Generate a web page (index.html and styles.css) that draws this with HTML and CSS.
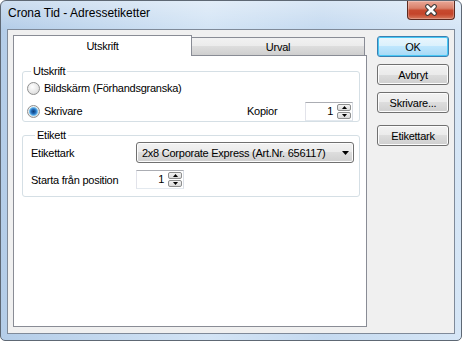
FILE: index.html
```html
<!DOCTYPE html>
<html lang="sv">
<head>
  <meta charset="UTF-8" />
  <title>Crona Tid - Adressetiketter</title>
  <link rel="stylesheet" href="styles.css">
</head>
<body>
  <div class="window">
    <div class="titlebar">
      <span class="title">Crona Tid - Adressetiketter</span>
      <span class="close">
        <svg width="14" height="12" viewBox="0 0 14 12">
          <path d="M3.5 2.5 L10.5 9.5 M10.5 2.5 L3.5 9.5" stroke="#3a3a3a" stroke-width="4.6" stroke-linecap="round" />
          <path d="M3.5 2.5 L10.5 9.5 M10.5 2.5 L3.5 9.5" stroke="#fff" stroke-width="2.6" stroke-linecap="round" />
        </svg>
      </span>
    </div>

    <div class="client">
      <div class="tabctrl">
        <div class="tabs">
          <div class="tab active">Utskrift</div>
          <div class="tab">Urval</div>
        </div>
        <div class="panel">
          <fieldset class="group">
            <legend>Utskrift</legend>
            <div class="row">
              <span class="radio"></span>
              <span>Bildskärm (Förhandsgranska)</span>
            </div>
            <div class="row row-gap">
              <span class="radio checked"></span>
              <span>Skrivare</span>
              <span class="kopior">Kopior</span>
              <div class="spin">
                <span class="spin-val">1</span>
                <span class="spin-btns">
                  <span><svg width="5" height="3" viewBox="0 0 5 3"><polygon points="0,3 5,3 2.5,0" fill="#000" /></svg></span>
                  <span><svg width="5" height="3" viewBox="0 0 5 3"><polygon points="0,0 5,0 2.5,3" fill="#000" /></svg></span>
                </span>
              </div>
            </div>
          </fieldset>

          <fieldset class="group group-etikett">
            <legend>Etikett</legend>
            <div class="row row-tall">
              <span class="field-label">Etikettark</span>
              <div class="combo">
                <span>2x8 Corporate Express (Art.Nr. 656117)</span>
                <svg width="7" height="4" viewBox="0 0 7 4"><polygon points="0,0 7,0 3.5,4" fill="#000" /></svg>
              </div>
            </div>
            <div class="row row-tall row-gap2">
              <span class="field-label">Starta från position</span>
              <div class="spin">
                <span class="spin-val">1</span>
                <span class="spin-btns">
                  <span><svg width="5" height="3" viewBox="0 0 5 3"><polygon points="0,3 5,3 2.5,0" fill="#000" /></svg></span>
                  <span><svg width="5" height="3" viewBox="0 0 5 3"><polygon points="0,0 5,0 2.5,3" fill="#000" /></svg></span>
                </span>
              </div>
            </div>
          </fieldset>
        </div>
      </div>

      <div class="buttons">
        <div class="btn default">OK</div>
        <div class="btn">Avbryt</div>
        <div class="btn">Skrivare...</div>
        <div class="btn btn-sep">Etikettark</div>
      </div>
    </div>
  </div>
</body>
</html>
```

FILE: styles.css
```css
* { box-sizing: border-box; }
html, body { margin: 0; }
body {
  width: 462px;
  height: 341px;
  font-family: "Liberation Sans", Arial, sans-serif;
  font-size: 11px;
  letter-spacing: -0.25px;
  color: #000;
  background: #fff;
  overflow: hidden;
}

.window {
  width: 462px;
  height: 341px;
  display: flex;
  flex-direction: column;
  padding: 0 6px 6px;
  border: 1px solid #5e6874;
  border-radius: 6px 6px 5px 5px;
  background:
    linear-gradient(rgba(255,255,255,0.35), rgba(255,255,255,0) 28px),
    linear-gradient(to right, #b4cde8, #d3e4f5 45%, #c5daf0 70%, #d6e6f6);
}
.titlebar {
  flex: none;
  height: 28px;
  display: flex;
  align-items: flex-start;
}
.title {
  font-size: 12px;
  letter-spacing: 0;
  line-height: 15px;
  padding: 5px 0 0 1px;
}
.close {
  margin-left: auto;
  width: 48px;
  height: 19px;
  display: flex;
  align-items: center;
  justify-content: center;
  border: 1px solid #5c2a20;
  border-top: none;
  border-radius: 0 0 4px 4px;
  background: linear-gradient(#eaa897 0, #d9806a 40%, #c74a2f 52%, #c4442a 72%, #d6785c 100%);
  box-shadow: inset 0 0 0 1px rgba(255,255,255,0.25);
}

.client {
  flex: 1;
  display: flex;
  padding: 5px 0 0 5px;
  border: 1px solid #7f8a99;
  background: #f0f0f0;
}

.tabctrl { width: 354px; }
.tabs {
  height: 20px;
  display: flex;
  align-items: flex-end;
}
.tab {
  width: 173px;
  height: 18px;
  display: flex;
  align-items: center;
  justify-content: center;
  border: 1px solid #898c95;
  border-left: none;
  border-bottom: none;
  background: linear-gradient(#f2f2f2, #ebebeb 50%, #dddddd 50%, #cfcfcf);
}
.tab.active {
  position: relative;
  z-index: 1;
  width: 179px;
  height: 21px;
  margin-bottom: -1px;
  padding-bottom: 1px;
  border-left: 1px solid #898c95;
  background: #fff;
}
.panel {
  height: 272px;
  padding: 9px 6px 0 8px;
  border: 1px solid #898c95;
  background: #fff;
}

.group {
  margin: 0;
  min-width: 0;
  padding: 0 6px 0 4px;
  border: 1px solid #d5dfe5;
  border-radius: 3px;
}
.group legend {
  margin-left: 4px;
  padding: 0 2px;
  line-height: 13px;
}
.group-etikett {
  margin-top: 7px;
  padding: 0 4px 6px 8px;
}

.row {
  height: 20px;
  display: flex;
  align-items: center;
}
.row-gap { margin-top: 3px; }
.row-tall { height: 21px; }
.row-gap2 { margin-top: 6px; }

.radio {
  width: 13px;
  height: 13px;
  margin-right: 4px;
  border: 1px solid #8e8f8f;
  border-radius: 50%;
  background: radial-gradient(circle at 40% 35%, #ffffff, #e8e8e8 55%, #cfcfcf);
}
.radio.checked {
  background:
    radial-gradient(circle, #0d3f78 0, #1f64b0 2px, #4d9ee0 3.5px, #8fd0f3 4.3px, rgba(143,208,243,0) 4.8px),
    radial-gradient(circle at 40% 35%, #ffffff, #e8e8e8 55%, #cfcfcf);
}

.kopior {
  margin-left: auto;
  width: 58px;
}
.field-label { width: 105px; }

.spin {
  width: 48px;
  height: 19px;
  display: flex;
  padding: 1px;
  border: 1px solid;
  border-color: #abadb3 #dbdfe6 #e3e9ef #e2e3ea;
  background: #fff;
}
.spin-val {
  flex: 1;
  text-align: right;
  padding-right: 4px;
  line-height: 15px;
}
.spin-btns {
  width: 14px;
  display: flex;
  flex-direction: column;
  gap: 1px;
}
.spin-btns span {
  flex: 1;
  display: flex;
  align-items: center;
  justify-content: center;
  border: 1px solid #8e8f8f;
  border-radius: 2px;
  background: linear-gradient(#f4f4f4, #d9d9d9);
}

.combo {
  width: 218px;
  height: 21px;
  display: flex;
  align-items: center;
  justify-content: space-between;
  padding: 0 4px 0 5px;
  border: 1px solid #707070;
  border-radius: 3px;
  background: linear-gradient(#f2f2f2, #ebebeb 50%, #dddddd 50%, #cfcfcf);
  box-shadow: inset 0 0 0 1px #fcfcfc;
}

.buttons {
  width: 72px;
  margin: 1px 0 0 10px;
  display: flex;
  flex-direction: column;
}
.btn {
  height: 21px;
  margin-bottom: 7px;
  display: flex;
  align-items: center;
  justify-content: center;
  border: 1px solid #707070;
  border-radius: 3px;
  background: linear-gradient(#f2f2f2, #ebebeb 50%, #dddddd 50%, #cfcfcf);
  box-shadow: inset 0 0 0 1px #fcfcfc;
}
.btn.default {
  border-color: #3c7fb1;
  background: linear-gradient(#eaf6fd, #d9f0fc 50%, #bee6fd 50%, #a7d9f5);
  box-shadow: inset 0 0 0 1px #48c8f5;
}
.btn-sep { margin-top: 5px; }
```
